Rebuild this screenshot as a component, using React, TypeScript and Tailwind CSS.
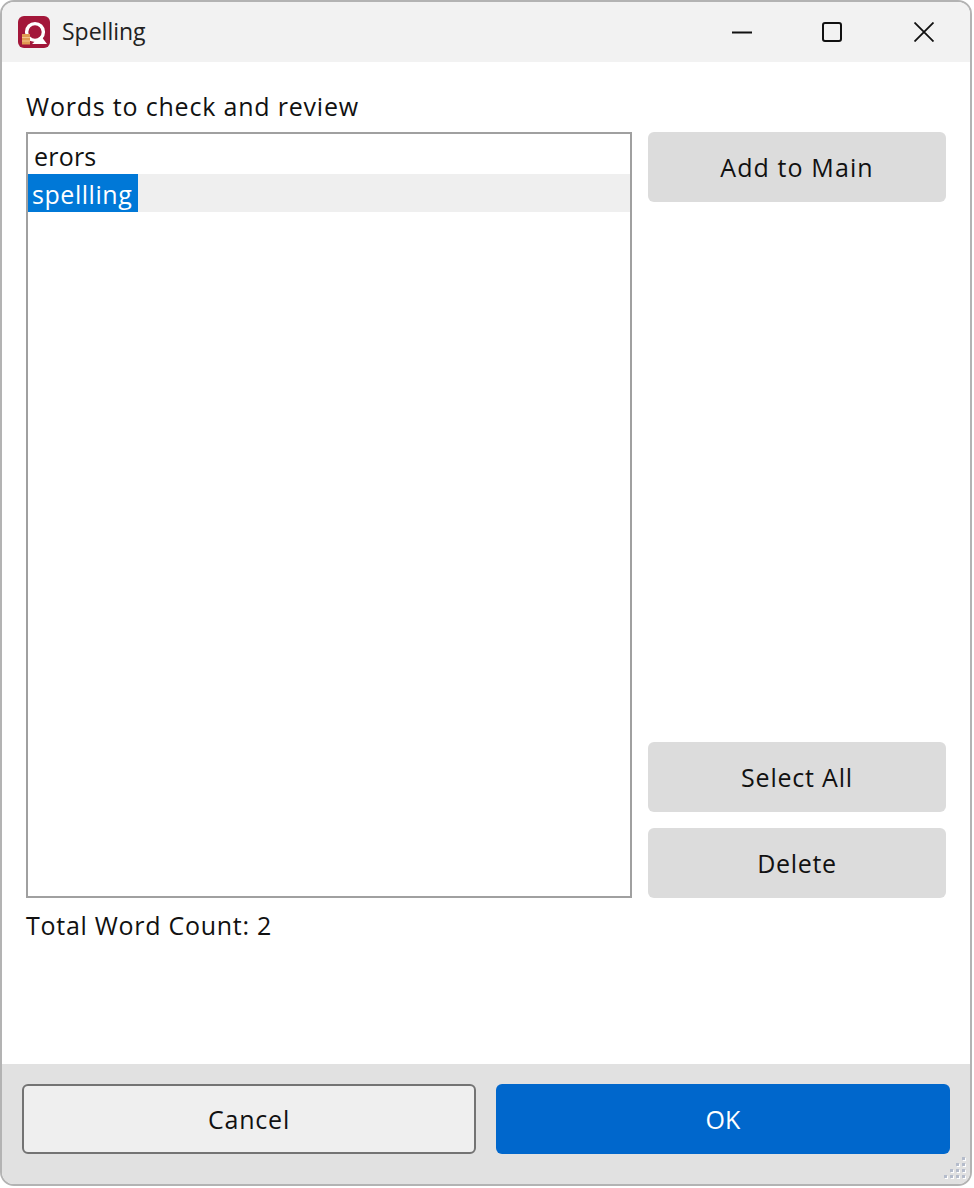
const fontClass = "font-['Open_Sans','Noto_Sans',sans-serif]";

function AppIcon() {
  return (
    <svg width="32" height="32" viewBox="0 0 32 32" className="shrink-0">
      <rect width="32" height="32" rx="6" fill="#a3173a" />
      <circle cx="17" cy="16" r="8.4" fill="none" stroke="#fff" strokeWidth="3.4" />
      <path d="M14 28h15L23 20z" fill="#fff" />
      <rect x="4" y="18" width="8" height="10.5" fill="#e09a52" />
      <path d="M4 21.5h8M4 25h8" stroke="#f3c48e" strokeWidth="1" />
    </svg>
  );
}

function WindowControls() {
  return (
    <div className="flex items-center h-full text-[#111]">
      <svg width="20" height="20" viewBox="0 0 20 20" className="mr-[70px]">
        <path d="M0 10.5h20" stroke="currentColor" strokeWidth="2" />
      </svg>
      <svg width="20" height="20" viewBox="0 0 20 20" className="mr-[72px]">
        <rect x="1" y="1" width="18" height="18" rx="2" fill="none" stroke="currentColor" strokeWidth="2" />
      </svg>
      <svg width="20" height="20" viewBox="0 0 20 20">
        <path d="M0.5 0.5l19 19M19.5 0.5l-19 19" stroke="currentColor" strokeWidth="1.8" />
      </svg>
    </div>
  );
}

function SideButton({ label, tracking }: { label: string; tracking: string }) {
  return (
    <button className={`w-full h-[70px] pt-[2px] rounded-[6px] bg-[#dcdcdc] text-[25px] text-[#111] ${tracking}`}>
      {label}
    </button>
  );
}

function ResizeGrip() {
  const dots = [
    [18, 0],
    [12, 6], [18, 6],
    [6, 12], [12, 12], [18, 12],
    [0, 18], [6, 18], [12, 18], [18, 18],
  ];
  return (
    <svg width="22" height="22" viewBox="0 0 22 22" className="absolute right-[4px] bottom-[5px]">
      {dots.map(([x, y]) => (
        <g key={`${x}-${y}`}>
          <rect x={x + 1} y={y + 1} width="3" height="3" fill="#fff" />
          <rect x={x} y={y} width="3" height="3" fill="#b5bccb" />
        </g>
      ))}
    </svg>
  );
}

export default function App() {
  return (
    <div className={`${fontClass} w-[974px] h-[1188px] bg-white`}>
      <div className="relative w-[972px] h-[1186px] border-2 border-[#b3b3b3] rounded-[14px] overflow-hidden flex flex-col bg-white">
        {/* Title bar */}
        <div className="h-[60px] shrink-0 bg-[#f2f2f2] flex items-center justify-between pl-[16px] pr-[36px]">
          <div className="flex items-center gap-[12px] -mt-[1px]">
            <AppIcon />
            <span className="text-[23px] leading-[34px] text-[#222] -translate-y-[1px]">Spelling</span>
          </div>
          <WindowControls />
        </div>

        {/* Body */}
        <div className="flex-1 px-[24px]">
          <div className="pt-[27px] mb-[9px] text-[25px] leading-[34px] text-[#111] tracking-[0.8px]">
            Words to check and review
          </div>
          <div className="flex gap-[16px] h-[766px]">
            <div className="w-[606px] border-2 border-[#a0a0a0] bg-white text-[25px] text-[#111]">
              <div className="h-[40px] pt-[5px] pl-[6px] leading-[34px] tracking-[0.2px]">erors</div>
              <div className="h-[38px] bg-[#efefef]">
                <span className="inline-block h-[38px] w-[110px] bg-[#0078d7] pl-[4px] pt-[1px] text-white leading-[38px] tracking-[0.55px]">
                  spellling
                </span>
              </div>
            </div>
            <div className="w-[298px] flex flex-col">
              <SideButton label="Add to Main" tracking="tracking-[1.1px]" />
              <div className="mt-auto mb-[16px]">
                <SideButton label="Select All" tracking="tracking-[0.8px]" />
              </div>
              <SideButton label="Delete" tracking="tracking-[0.7px]" />
            </div>
          </div>
          <div className="mt-[10px] text-[25px] leading-[34px] text-[#111] tracking-[0.72px]">Total Word Count: 2</div>
        </div>

        {/* Footer */}
        <div className="h-[120px] shrink-0 bg-[#e1e1e1] px-[20px] pt-[20px] flex gap-[20px]">
          <button className="w-[454px] h-[70px] pt-[2px] rounded-[6px] border-2 border-[#737373] bg-[#efefef] text-[25px] text-[#111] tracking-[0.8px]">
            Cancel
          </button>
          <button className="w-[454px] h-[70px] pt-[2px] rounded-[6px] bg-[#0067cc] text-[25px] text-white">
            OK
          </button>
        </div>
        <ResizeGrip />
      </div>
    </div>
  );
}
